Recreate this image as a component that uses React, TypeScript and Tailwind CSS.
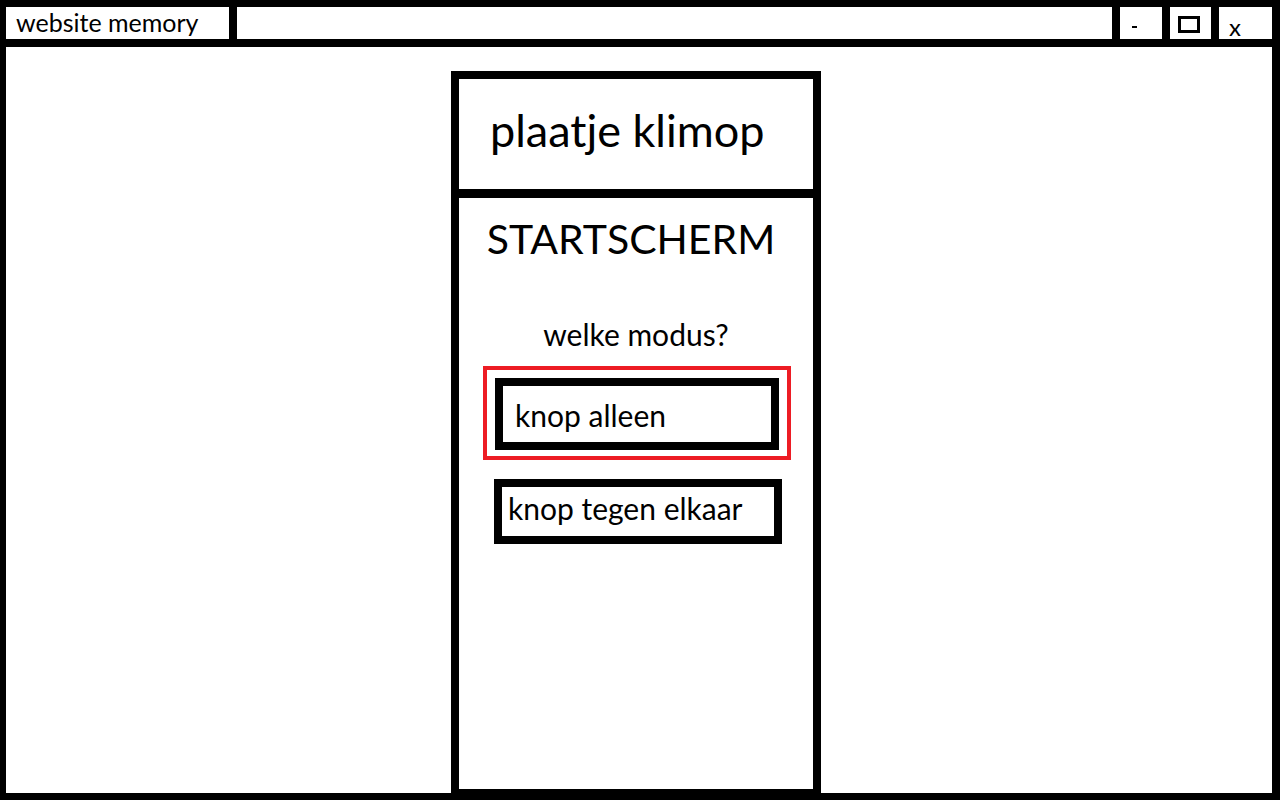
import React from 'react';

const font = { fontFamily: 'Lato, "Open Sans", sans-serif' };

const App = () => {
    return (
        <div className="w-[1280px] h-[800px] bg-black flex flex-col pl-[6px] pr-[8px] pt-[7px] pb-[7px]" style={font}>
            {/* title bar */}
            <div className="h-[32px] flex gap-[8px] shrink-0">
                <div className="w-[223px] bg-white pl-[10px] pt-[3px] text-[25px] leading-[25px] text-black">website memory</div>
                <div className="flex-1 bg-white" />
                <div className="w-[42px] bg-white relative">
                    <div className="absolute left-[12px] top-[19px] w-[5px] h-[2px] bg-black" />
                </div>
                <div className="w-[41px] bg-white relative">
                    <div className="absolute left-[8px] top-[9px] w-[22px] h-[17px] border-[3px] border-black" />
                </div>
                <div className="w-[53px] bg-white pl-[10px] pt-[10px] text-[24px] leading-[20px] text-black">x</div>
            </div>

            {/* page */}
            <div className="mt-[8px] flex-1 bg-white pl-[445px] pt-[24px] flex">
                <div className="w-[370px] border-[8px] border-b-[4px] border-black flex flex-col">
                    <div className="h-[110px] shrink-0 pl-[31px] pt-[29px]">
                        <div className="text-[45px] leading-[45px] text-black">plaatje klimop</div>
                    </div>
                    <div className="h-[9px] bg-black shrink-0" />
                    <div className="flex-1 flex flex-col">
                        <div className="mt-[20px] pr-[10px] text-center text-[41px] leading-[41px] text-black">STARTSCHERM</div>
                        <div className="mt-[60px] text-center text-[30px] leading-[30px] text-black">welke modus?</div>
                        <div className="mt-[17px] ml-[24px] w-[308px] border-[4px] border-[#ed1c24] px-[8px] pt-[8px] pb-[6px]">
                            <div className="h-[72px] border-[8px] border-black pl-[12px] pt-[14px] text-[30px] leading-[30px] text-black">
                                knop alleen
                            </div>
                        </div>
                        <div className="mt-[19px] ml-[35px] w-[288px] h-[65px] border-[8px] border-black pl-[6px] pt-[6px] text-[30px] leading-[30px] text-black">
                            knop tegen elkaar
                        </div>
                    </div>
                </div>
            </div>
        </div>
    );
};

export default App;
